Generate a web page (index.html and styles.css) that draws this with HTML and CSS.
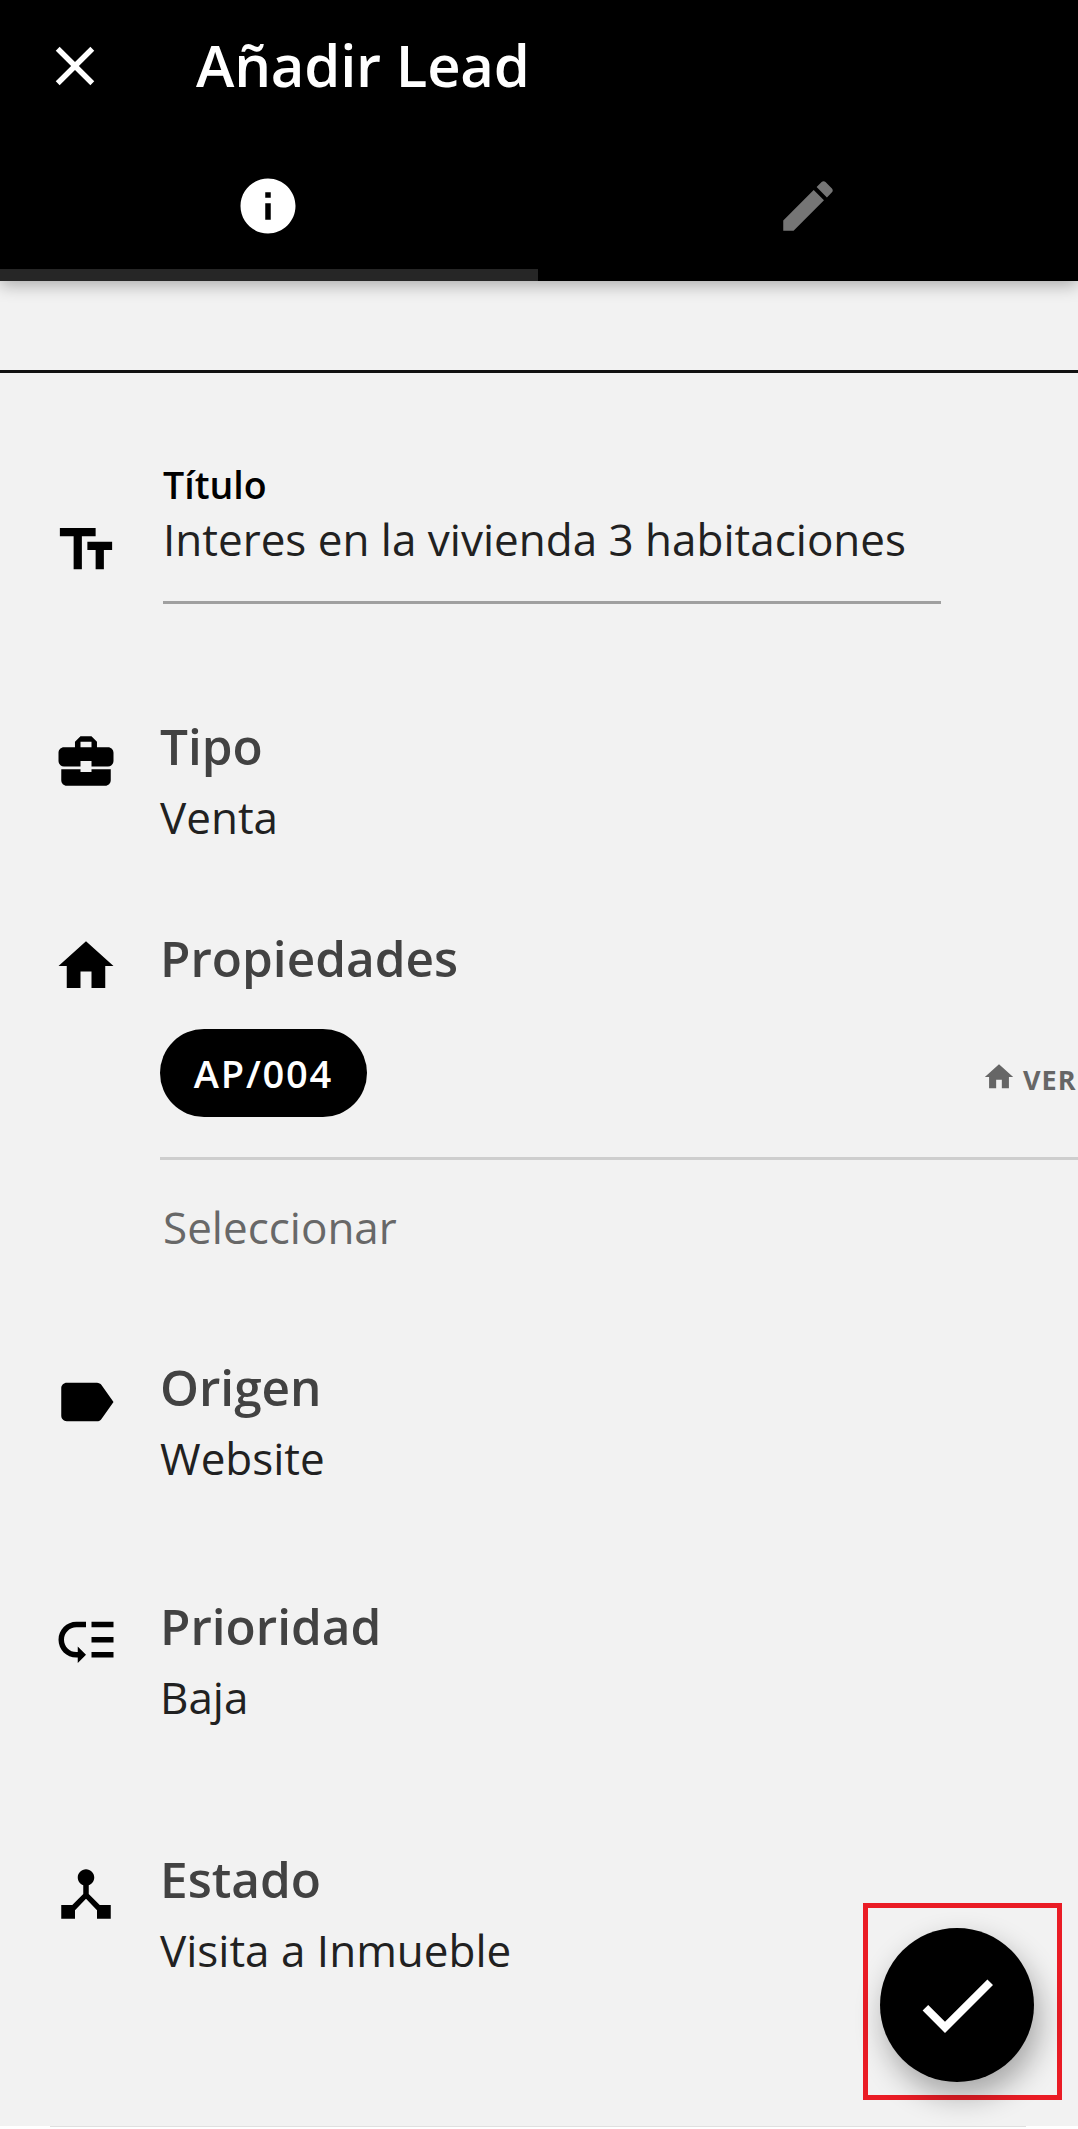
FILE: index.html
```html
<!DOCTYPE html>
<html lang="es">
<head>
    <meta charset="UTF-8">
    <meta name="viewport" content="width=device-width, initial-scale=1.0">
    <title>Añadir Lead</title>
    <link rel="stylesheet" href="styles.css">
</head>
<body>
    <header class="header">
        <div class="toolbar">
            <svg class="icon" viewBox="0 0 24 24"><path d="M19 6.41L17.59 5 12 10.59 6.41 5 5 6.41 10.59 12 5 17.59 6.41 19 12 13.41 17.59 19 19 17.59 13.41 12z"/></svg>
            <h1>Añadir Lead</h1>
        </div>
        <nav class="tabs">
            <div class="tab active">
                <svg class="icon" viewBox="0 0 24 24"><path d="M12 2C6.48 2 2 6.48 2 12s4.48 10 10 10 10-4.48 10-10S17.52 2 12 2zm1 15h-2v-6h2v6zm0-8h-2V7h2v2z"/></svg>
            </div>
            <div class="tab">
                <svg class="icon" viewBox="0 0 24 24"><path d="M3 17.25V21h3.75L17.81 9.94l-3.75-3.75L3 17.25zM20.71 7.04c.39-.39.39-1.02 0-1.41l-2.34-2.34c-.39-.39-1.02-.39-1.41 0l-1.83 1.83 3.75 3.75 1.83-1.83z"/></svg>
            </div>
        </nav>
    </header>

    <main class="form">
        <section class="row row-title">
            <svg class="icon" viewBox="0 0 24 24"><path d="M2.5 4v3h5v12h3V7h5V4h-13zm19 5h-9v3h3v7h3v-7h3V9z"/></svg>
            <div class="field">
                <label>Título</label>
                <p class="value">Interes en la vivienda 3 habitaciones</p>
            </div>
        </section>

        <section class="row row-type">
            <svg class="icon" viewBox="0 0 24 24"><path d="M10 16v-1H3.01L3 19c0 1.11.89 2 2 2h14c1.11 0 2-.89 2-2v-4h-7v1h-4zm10-9h-4.01V5l-2-2h-4l-2 2v2H4c-1.1 0-2 .9-2 2v3c0 1.11.89 2 2 2h6v-2h4v2h6c1.1 0 2-.9 2-2V9c0-1.1-.9-2-2-2zm-6 0h-4V5h4v2z"/></svg>
            <div>
                <h2>Tipo</h2>
                <p class="value">Venta</p>
            </div>
        </section>

        <section class="row row-properties">
            <svg class="icon" viewBox="0 0 24 24"><path d="M10 20v-6h4v6h5v-8h3L12 3 2 12h3v8z"/></svg>
            <div>
                <h2>Propiedades</h2>
                <div class="property">
                    <span class="chip">AP/004</span>
                    <span class="view">
                        <svg viewBox="0 0 24 24"><path d="M10 20v-6h4v6h5v-8h3L12 3 2 12h3v8z"/></svg>
                        <span>VER</span>
                    </span>
                </div>
                <p class="value placeholder">Seleccionar</p>
            </div>
        </section>

        <section class="row row-source">
            <svg class="icon" viewBox="0 0 24 24"><path d="M17.63 5.84C17.27 5.33 16.67 5 16 5L5 5.01C3.9 5.01 3 5.9 3 7v10c0 1.1.9 1.99 2 1.99L16 19c.67 0 1.27-.33 1.63-.84L22 12l-4.37-6.16z"/></svg>
            <div>
                <h2>Origen</h2>
                <p class="value">Website</p>
            </div>
        </section>

        <section class="row row-priority">
            <svg class="icon" viewBox="0 0 24 24"><path d="M14 5h8v2h-8zm0 5.5h8v2h-8zm0 5.5h8v2h-8zM2 11.5C2 15.08 4.92 18 8.5 18H9v2l3-3-3-3v2h-.5C6.02 16 4 13.98 4 11.5S6.02 7 8.5 7H12V5H8.5C4.92 5 2 7.92 2 11.5z"/></svg>
            <div>
                <h2>Prioridad</h2>
                <p class="value">Baja</p>
            </div>
        </section>

        <section class="row row-status">
            <svg class="icon" viewBox="0 0 24 24"><path d="M17 16l-4-4V8.82C14.16 8.4 15 7.3 15 6c0-1.66-1.34-3-3-3S9 4.34 9 6c0 1.3.84 2.4 2 2.82V12l-4 4H3v5h5v-3.05l4-4.2 4 4.2V21h5v-5h-4z"/></svg>
            <div>
                <h2>Estado</h2>
                <p class="value">Visita a Inmueble</p>
            </div>
        </section>
    </main>

    <footer class="bottom"></footer>

    <div class="highlight">
        <button class="fab" aria-label="Guardar">
            <svg viewBox="0 0 24 24"><path d="M9 16.2L4.8 12l-1.4 1.4L9 19 21 7l-1.4-1.4L9 16.2z"/></svg>
        </button>
    </div>
</body>
</html>
```
FILE: styles.css
```css
* {
    box-sizing: border-box;
}
body {
    margin: 0;
    position: relative;
    height: 2129px;
    display: flex;
    flex-direction: column;
    overflow: hidden;
    font-family: "Open Sans", sans-serif;
    background-color: #f2f2f2;
    color: #212121;
}
h1, h2, p {
    margin: 0;
}
svg {
    display: block;
    fill: currentColor;
}
.icon {
    width: 66px;
    height: 66px;
    flex-shrink: 0;
}

/* header */
.header {
    height: 281px;
    background-color: #000;
    color: #fff;
    box-shadow: 0 4px 16px rgba(0,0,0,0.3);
}
.toolbar {
    height: 132px;
    padding-left: 42px;
    display: flex;
    align-items: center;
    gap: 88px;
}
h1 {
    font-size: 58px;
    font-weight: 600;
    letter-spacing: -0.2px;
    line-height: 128px;
    padding-bottom: 2px;
    white-space: nowrap;
}
.tabs {
    display: flex;
    height: 149px;
}
.tab {
    flex: 1;
    display: flex;
    justify-content: center;
    padding-top: 41px;
    color: #757575;
}
.tab.active {
    flex: 0 0 538px;
    padding-right: 2px;
    color: #fff;
    border-bottom: 12px solid #262626;
}

/* form */
.form {
    flex: 1;
    margin-top: 89px;
    border-top: 3px solid #111;
}
.row {
    display: grid;
    grid-template-columns: 66px 1fr;
    column-gap: 41px;
    padding-left: 53px;
}
.row .icon {
    margin-top: 12px;
    color: #000;
}
h2 {
    font-size: 49.5px;
    font-weight: 600;
    line-height: 60px;
    color: #424242;
}
.value {
    margin-top: 11px;
    margin-bottom: 1px;
    font-size: 44px;
    line-height: 60px;
    white-space: nowrap;
}
.row-title {
    padding-top: 90px;
}
.row-title .icon {
    margin-top: 54px;
}
.field {
    width: 778px;
    margin-left: 3px;
    padding-bottom: 31px;
    border-bottom: 3px solid #a0a0a0;
}
.field label {
    display: block;
    font-size: 37.5px;
    font-weight: 600;
    line-height: 44px;
    color: #000;
}
.field .value {
    margin-top: 2px;
}
.row-type {
    margin-top: 112px;
}
.row-properties {
    margin-top: 80px;
}
.row-properties .icon {
    margin-top: 5px;
}
.row-source {
    margin-top: 101px;
}
.row-priority {
    margin-top: 107px;
}
.row-status {
    margin-top: 121px;
}

/* selected property */
.property {
    display: flex;
    justify-content: space-between;
    margin-top: 41px;
    padding-bottom: 40px;
    border-bottom: 3px solid #cecece;
}
.chip {
    width: 207px;
    height: 88px;
    border-radius: 44px;
    background-color: #000;
    color: #fff;
    font-size: 38px;
    font-weight: 600;
    letter-spacing: 1.8px;
    line-height: 88px;
    text-align: center;
}
.view {
    display: flex;
    gap: 7px;
    width: 96px;
    padding-top: 31px;
    color: #666;
    font-size: 27px;
    font-weight: 700;
    letter-spacing: 1px;
    line-height: 40px;
}
.view svg {
    width: 34px;
    height: 34px;
    flex-shrink: 0;
}
.placeholder {
    margin-top: 37px;
    margin-bottom: 0;
    padding-left: 3px;
    color: #686868;
}
.row-source {
    margin-top: 100px;
}

/* edge of the next card */
.bottom {
    height: 3px;
    padding: 0 52px 0 50px;
    background-color: #fff;
}
.bottom::before {
    content: "";
    display: block;
    height: 1px;
    background-color: #e0e0e0;
}

/* save button */
.highlight {
    position: absolute;
    left: 863px;
    top: 1903px;
    width: 199px;
    height: 197px;
    padding: 20px 0 0 12px;
    border: 5px solid #ea1c25;
}
.fab {
    display: flex;
    align-items: center;
    justify-content: center;
    width: 154px;
    height: 154px;
    padding: 0;
    border: none;
    border-radius: 50%;
    background-color: #000;
    color: #fff;
    box-shadow: 5px 14px 30px rgba(0,0,0,0.32);
}
.fab svg {
    width: 96px;
    height: 96px;
}
```
